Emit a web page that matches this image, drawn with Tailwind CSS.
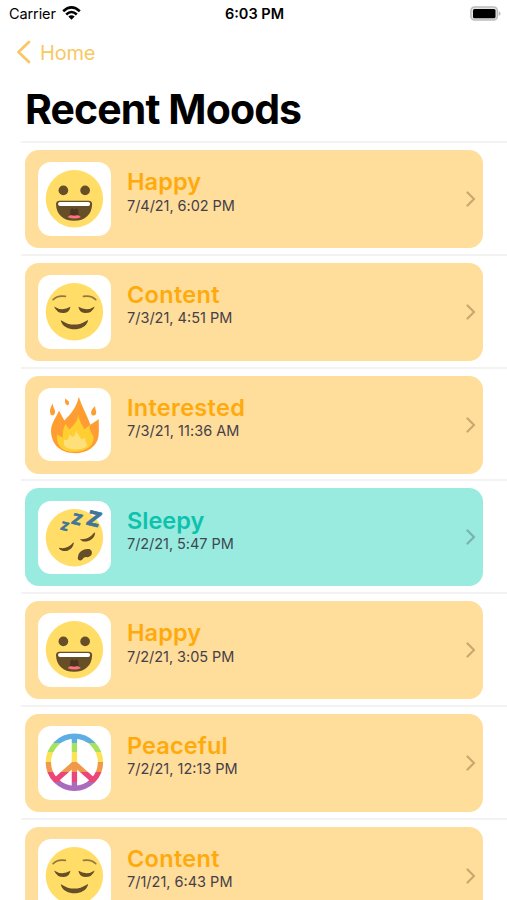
<!DOCTYPE html>
<html lang="en">
    <head>
        <meta charset="UTF-8">
        <meta name="viewport" content="width=device-width, initial-scale=1.0">
        <title>Recent Moods</title>
        <script src="https://cdn.jsdelivr.net/npm/@tailwindcss/browser@4"></script>
    </head>
    <body class="bg-white h-screen overflow-hidden font-['Inter','Liberation_Sans',sans-serif] text-black">
        <!-- shared icons -->
        <svg class="absolute w-0 h-0" aria-hidden="true">
            <defs>
                <linearGradient id="rainbow" gradientUnits="userSpaceOnUse" x1="0" y1="34" x2="0" y2="207">
                    <stop offset="0.16" stop-color="#5faee3" /><stop offset="0.16" stop-color="#a8e25c" />
                    <stop offset="0.33" stop-color="#a8e25c" /><stop offset="0.33" stop-color="#fbe355" />
                    <stop offset="0.5" stop-color="#fbe355" /><stop offset="0.5" stop-color="#f0994a" />
                    <stop offset="0.67" stop-color="#f0994a" /><stop offset="0.67" stop-color="#ec4577" />
                    <stop offset="0.84" stop-color="#ec4577" /><stop offset="0.84" stop-color="#aa6bbd" />
                </linearGradient>
            </defs>
            <symbol id="happy" viewBox="12 12 220 220">
                <circle cx="121" cy="122" r="86" fill="#ffdd67" />
                <circle cx="88" cy="97" r="14.5" fill="#664e27" />
                <circle cx="153" cy="97" r="14.5" fill="#664e27" />
                <path d="M76 128H164Q174 128 174 139C173 168 153 188 120 188S67 168 66 139Q66 128 76 128Z" fill="#664e27" />
                <path d="M78 132H162Q168 132 168 138Q168 144 162 144H78Q72 144 72 138Q72 132 78 132Z" fill="#fff" />
                <path d="M108 173C108 158 109 151 115 151Q120 151 120 157Q121 151 127 151C133 151 133 160 134 173Z" fill="#4c3520" />
                <path d="M101 177C106 170 114 171 120 173C127 170 135 170 140 177Q121 185 101 177Z" fill="#ff717f" />
            </symbol>
            <symbol id="content" viewBox="12 12 220 220">
                <circle cx="121" cy="122" r="86" fill="#ffdd67" />
                <path d="M57 86Q70 72 94 76M185 86Q172 72 148 76" fill="none" stroke="#947640" stroke-width="5" stroke-linecap="round" />
                <path d="M60 106Q84 122 109 107Q107 124 89 126Q68 126 60 106ZM182 106Q158 122 133 107Q135 124 153 126Q174 126 182 106Z" fill="#664e27" />
                <path d="M82 148Q120 173 159 148Q163 145 161 151C151 182 91 182 81 151Q79 146 82 148Z" fill="#664e27" />
            </symbol>
            <symbol id="interested" viewBox="12 12 220 220">
                <path d="M134 38C143 66 158 91 169 122C178 116 187 111 194 105C193 119 196 139 193 157C188 188 158 207 123 207C84 207 53 186 51 143C50 119 64 103 75 80L91 109C109 90 127 72 134 38Z" fill="#ff9d33" />
                <path d="M56 58C49 70 46 80 49 89C52 97 61 94 63 86C64 76 56 70 56 58ZM94 43C91 54 93 61 100 64C106 64 106 55 103 51Q99 49 94 43ZM183 66C174 75 170 81 171 89C174 97 184 95 186 88C188 80 182 76 183 66Z" fill="#ff9d33" />
                <path d="M132 90C135 111 143 120 151 136L167 123C164 137 174 149 178 157C181 184 157 201 125 203C91 204 65 190 69 151L86 160C86 144 87 133 94 120L106 136C119 123 132 112 132 90Z" fill="#ffce31" />
                <path d="M126 137C129 150 138 158 143 166L153 160C152 176 163 179 157 187C147 198 106 200 94 188C86 181 91 174 88 167L101 168L106 151L116 159Q126 151 126 137Z" fill="#ffdf7a" />
            </symbol>
            <symbol id="peaceful" viewBox="12 12 220 220">
                <g fill="none" stroke="url(#rainbow)" stroke-width="16">
                    <circle cx="121" cy="120.500" r="78" />
                    <path d="M121 40L121.010 200M64 175L121 124L178 175" />
                </g>
            </symbol>
            <symbol id="chevron" viewBox="0 0 10 16">
                <path d="M1.500 1.500L8 8L1.500 14.500" fill="none" stroke="currentColor" stroke-width="2.200" stroke-linecap="round" stroke-linejoin="round" />
            </symbol>
        </svg>

        <!-- status bar -->
        <div class="grid grid-cols-3 items-center h-7 pl-[9px] pr-[6px] text-[14.500px]">
            <div class="flex items-center gap-1.5">
                <span class="tracking-[-0.1px]">Carrier</span>
                <svg class="w-[19px] h-[14px] -mt-0.5" viewBox="0 0 19 14">
                    <g fill="none" stroke="currentColor" stroke-width="2.600">
                        <path d="M1.200 5.300Q9.500 -2.500 17.800 5.300" />
                        <path d="M4.200 8.500Q9.500 3.500 14.800 8.500" />
                    </g>
                    <path d="M6.300 10.600Q9.500 8 12.700 10.600L9.500 13.800Z" fill="currentColor" />
                </svg>
            </div>
            <span class="text-center font-semibold whitespace-nowrap -ml-[1px]">6:03 PM</span>
            <svg class="justify-self-end w-[31px] h-[15px] -mt-0.5" viewBox="0 0 31 15">
                <rect x="0.900" y="0.900" width="26.500" height="13.200" rx="3.800" fill="#e4e4e4" stroke="#bcbcbc" stroke-width="1.500" />
                <rect x="3" y="2.900" width="22.500" height="9.300" rx="1.500" />
                <path d="M28.700 5V10Q30.600 9 30.600 7.500T28.700 5Z" fill="#bcbcbc" />
            </svg>
        </div>

        <!-- nav bar -->
        <div class="flex items-center h-12 pl-4 gap-[9px] text-[#f9c864]">
            <svg class="w-[15px] h-6" viewBox="0 0 15 24">
                <path d="M13 2L2.500 12L13 22" fill="none" stroke="currentColor" stroke-width="2.800" stroke-linecap="round" stroke-linejoin="round" />
            </svg>
            <span class="text-[20px] tracking-[-0.2px] pt-px">Home</span>
        </div>
        <h1 class="h-[65px] pl-[25px] pt-2 text-[41px] leading-[50px] font-bold tracking-[-0.9px]">Recent Moods</h1>

        <!-- moods -->
        <ul>
            <li class="h-[112.750px] pl-[21px]">
                <div class="border-t-2 border-[#f3f3f3] pt-[7px] pl-1 pr-6">
                    <div class="flex items-center h-[98px] rounded-[14px] bg-[#ffdd9a] pl-[12.500px] pr-[7px]">
                        <svg class="size-[73.500px] rounded-[13px] bg-white"><use href="#happy" /></svg>
                        <div class="flex-1 self-start pl-4 pt-[18.300px]">
                            <h2 class="text-[23.500px] leading-[28.400px] font-semibold tracking-[0.1px] text-[#ffaa0c]">Happy</h2>
                            <p class="text-[14.500px] leading-[18px] tracking-[-0.05px] text-[#45404a]">7/4/21, 6:02 PM</p>
                        </div>
                        <svg class="w-[10px] h-4 text-[#c9a96e]"><use href="#chevron" /></svg>
                    </div>
                </div>
            </li>
            <li class="h-[112.750px] pl-[21px]">
                <div class="border-t-2 border-[#f3f3f3] pt-[7px] pl-1 pr-6">
                    <div class="flex items-center h-[98px] rounded-[14px] bg-[#ffdd9a] pl-[12.500px] pr-[7px]">
                        <svg class="size-[73.500px] rounded-[13px] bg-white"><use href="#content" /></svg>
                        <div class="flex-1 self-start pl-4 pt-[18.300px]">
                            <h2 class="text-[23.500px] leading-[28.400px] font-semibold tracking-[0.3px] text-[#ffaa0c]">Content</h2>
                            <p class="text-[14.500px] leading-[18px] text-[#45404a]">7/3/21, 4:51 PM</p>
                        </div>
                        <svg class="w-[10px] h-4 text-[#c9a96e]"><use href="#chevron" /></svg>
                    </div>
                </div>
            </li>
            <li class="h-[112.750px] pl-[21px]">
                <div class="border-t-2 border-[#f3f3f3] pt-[7px] pl-1 pr-6">
                    <div class="flex items-center h-[98px] rounded-[14px] bg-[#ffdd9a] pl-[12.500px] pr-[7px]">
                        <svg class="size-[73.500px] rounded-[13px] bg-white"><use href="#interested" /></svg>
                        <div class="flex-1 self-start pl-4 pt-[18.300px]">
                            <h2 class="text-[23.500px] leading-[28.400px] font-semibold tracking-[0.3px] text-[#ffaa0c]">Interested</h2>
                            <p class="text-[14.500px] leading-[18px] tracking-[0.05px] text-[#45404a]">7/3/21, 11:36 AM</p>
                        </div>
                        <svg class="w-[10px] h-4 text-[#c9a96e]"><use href="#chevron" /></svg>
                    </div>
                </div>
            </li>
            <li class="h-[112.750px] pl-[21px]">
                <div class="border-t-2 border-[#f3f3f3] pt-[7px] pl-1 pr-6">
                    <div class="flex items-center h-[98px] rounded-[14px] bg-[#99eadf] pl-[12.500px] pr-[7px]">
                        <svg class="size-[73.500px] rounded-[13px] bg-white" viewBox="12 12 220 220">
                            <circle cx="121" cy="122" r="86" fill="#ffdd67" />
                            <path d="M75 152Q99 158 117 137Q122 135 118 142C113 161 88 169 75 154ZM139 126Q162 129 180 107Q185 104 182 112C179 129 151 141 139 128Z" fill="#664e27" />
                            <path d="M132 177C134 162 151 153 166 156C179 162 174 181 159 180C147 177 146 191 138 190C131 189 130 184 132 177Z" fill="#664e27" />
                            <g fill="#3f7596" stroke="#3f7596" stroke-width="2" stroke-linejoin="round" font-weight="800" text-anchor="middle">
                                <text transform="translate(92 88) rotate(13) skewX(-5)" y="12" font-size="34">Z</text>
                                <text transform="translate(129 67) rotate(13) skewX(-5)" y="16" font-size="44">Z</text>
                                <text transform="translate(180 65) rotate(13) skewX(-5)" y="22" font-size="61">Z</text>
                            </g>
                        </svg>
                        <div class="flex-1 self-start pl-4 pt-[18.300px]">
                            <h2 class="text-[23.500px] leading-[28.400px] font-semibold text-[#0dc2ad]">Sleepy</h2>
                            <p class="text-[14.500px] leading-[18px] tracking-[-0.05px] text-[#3d4951]">7/2/21, 5:47 PM</p>
                        </div>
                        <svg class="w-[10px] h-4 text-[#78b3ad]"><use href="#chevron" /></svg>
                    </div>
                </div>
            </li>
            <li class="h-[112.750px] pl-[21px]">
                <div class="border-t-2 border-[#f3f3f3] pt-[7px] pl-1 pr-6">
                    <div class="flex items-center h-[98px] rounded-[14px] bg-[#ffdd9a] pl-[12.500px] pr-[7px]">
                        <svg class="size-[73.500px] rounded-[13px] bg-white"><use href="#happy" /></svg>
                        <div class="flex-1 self-start pl-4 pt-[18.300px]">
                            <h2 class="text-[23.500px] leading-[28.400px] font-semibold tracking-[0.1px] text-[#ffaa0c]">Happy</h2>
                            <p class="text-[14.500px] leading-[18px] tracking-[-0.05px] text-[#45404a]">7/2/21, 3:05 PM</p>
                        </div>
                        <svg class="w-[10px] h-4 text-[#c9a96e]"><use href="#chevron" /></svg>
                    </div>
                </div>
            </li>
            <li class="h-[112.750px] pl-[21px]">
                <div class="border-t-2 border-[#f3f3f3] pt-[7px] pl-1 pr-6">
                    <div class="flex items-center h-[98px] rounded-[14px] bg-[#ffdd9a] pl-[12.500px] pr-[7px]">
                        <svg class="size-[73.500px] rounded-[13px] bg-white"><use href="#peaceful" /></svg>
                        <div class="flex-1 self-start pl-4 pt-[18.300px]">
                            <h2 class="text-[23.500px] leading-[28.400px] font-semibold tracking-[0.1px] text-[#ffaa0c]">Peaceful</h2>
                            <p class="text-[14.500px] leading-[18px] text-[#45404a]">7/2/21, 12:13 PM</p>
                        </div>
                        <svg class="w-[10px] h-4 text-[#c9a96e]"><use href="#chevron" /></svg>
                    </div>
                </div>
            </li>
            <li class="h-[112.750px] pl-[21px]">
                <div class="border-t-2 border-[#f3f3f3] pt-[7px] pl-1 pr-6">
                    <div class="flex items-center h-[98px] rounded-[14px] bg-[#ffdd9a] pl-[12.500px] pr-[7px]">
                        <svg class="size-[73.500px] rounded-[13px] bg-white"><use href="#content" /></svg>
                        <div class="flex-1 self-start pl-4 pt-[18.300px]">
                            <h2 class="text-[23.500px] leading-[28.400px] font-semibold tracking-[0.3px] text-[#ffaa0c]">Content</h2>
                            <p class="text-[14.500px] leading-[18px] text-[#45404a]">7/1/21, 6:43 PM</p>
                        </div>
                        <svg class="w-[10px] h-4 text-[#c9a96e]"><use href="#chevron" /></svg>
                    </div>
                </div>
            </li>
        </ul>
    </body>
</html>
